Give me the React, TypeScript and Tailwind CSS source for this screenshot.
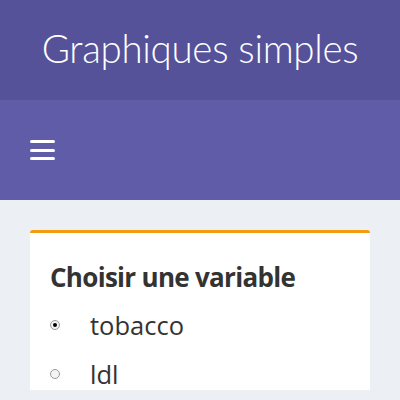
export default function App() {
  return (
    <div className="w-[400px] h-[400px] overflow-hidden bg-[#ecf0f5]" style={{ fontFamily: '"Open Sans", sans-serif' }}>
      <div className="h-[100px] bg-[#555299] flex items-center justify-center pb-[3px]">
        <span className="text-white text-[38.5px] font-light tracking-[-0.3px] leading-none" style={{ fontFamily: 'Lato, "Open Sans", sans-serif' }}>Graphiques simples</span>
      </div>
      <div className="h-[100px] bg-[#605ca8] flex items-center pl-[30px]">
        <div className="flex flex-col gap-[5.5px]">
          <div className="w-[25px] h-[3px] rounded-full bg-white" />
          <div className="w-[25px] h-[3px] rounded-full bg-white" />
          <div className="w-[25px] h-[3px] rounded-full bg-white" />
        </div>
      </div>
      <div className="px-[30px] pt-[30px]">
        <div className="bg-white rounded-t-[3px] border-t-[3px] border-[#f39c12] px-[20px] pt-[28px] text-[#333]">
          <div className="text-[26px] font-bold leading-[32px] tracking-[-0.7px]">Choisir une variable</div>
          <div className="mt-[16px] flex flex-col gap-[17px]">
            <div className="flex items-center h-[32px]">
              <div className="w-[10px] h-[10px] rounded-full border border-[#999] bg-[#f4f4f4] flex items-center justify-center">
                <div className="w-[4px] h-[4px] rounded-full bg-black" />
              </div>
              <span className="ml-[30px] text-[25.5px] leading-[32px]">tobacco</span>
            </div>
            <div className="flex items-center h-[32px]">
              <div className="w-[10px] h-[10px] rounded-full border border-[#999] bg-[#f4f4f4]" />
              <span className="ml-[30px] text-[25.5px] leading-[32px]">ldl</span>
            </div>
          </div>
        </div>
      </div>
    </div>
  );
}
